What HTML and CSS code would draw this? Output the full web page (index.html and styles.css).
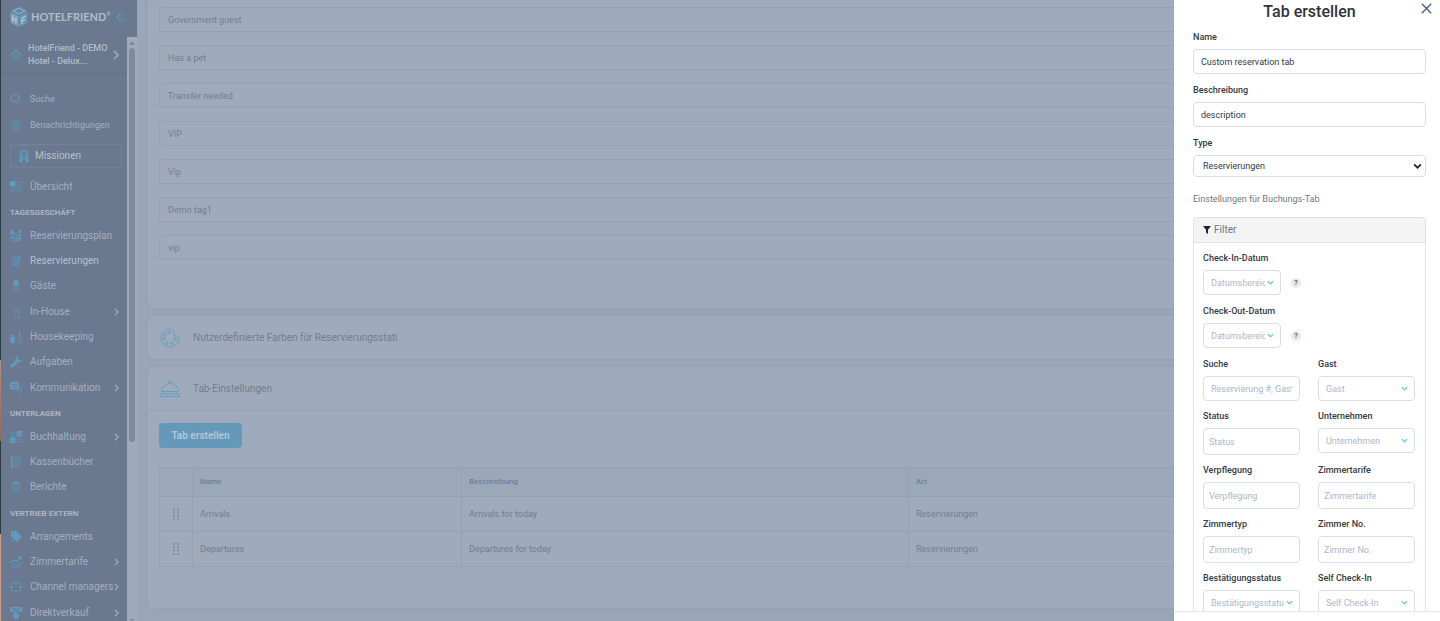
FILE: index.html
```html
<!DOCTYPE html>
<html lang="de">
<head>
<meta charset="utf-8">
<title>HotelFriend – Tab erstellen</title>
<link rel="stylesheet" href="styles.css">
</head>
<body>
<div class="app">
  <aside class="sidebar">
    <header class="brand">
      <svg class="brand-cube" viewBox="0 0 18 20"><path class="c1" d="M9 0l8 4-8 4-8-4z"/><path class="c2" d="M.5 5L8.500 9v11L.5 15.500z"/><path class="c3" d="M17.500 5L9.500 9v11l8-4.500z"/><path class="cl" d="M2.500 8.500v6M6 10.500v6M2.500 11.500L6 13.500M12 17v-6l3.500-2M12 14l3-1.500"/><path class="ct" d="M5 4l4-2 4 2-4 2z"/></svg>
      <span class="brand-name">HOTELFRIEND<sup>®</sup></span>
      <button class="collapse" aria-label="Menü einklappen"><svg viewBox="0 0 10 10"><path d="M5 1L1 5l4 4"/><path class="faint" d="M9 1L5 5l4 4"/></svg></button>
    </header>
    <div class="side-body">
      <nav class="menu">
        <a class="hotel" href="#">
          <svg class="ico" viewBox="0 0 12 12"><path class="d" d="M2 7l4-4 4 4v5H7V8.500H5V12H2z"/><path class="s" d="M.5 6.500L6 1l5.500 5.500"/></svg>
          <span>HotelFriend - DEMO<br>Hotel - Delux...</span>
          <svg class="arrow big" viewBox="0 0 6 10"><path d="M1 1l4 4-4 4"/></svg>
        </a>
        <ul class="top-links">
          <li><a href="#"><svg class="ico" viewBox="0 0 12 12"><circle class="s" cx="5" cy="5" r="4"/><path class="s d-line" d="M8 8l3 3"/></svg>Suche</a></li>
          <li><a href="#"><svg class="ico" viewBox="0 0 12 14"><path class="d" d="M6 0c3 1 4 3 4 5 0 3 1 4 2 6H0c1-2 2-3 2-6 0-2 1-4 4-5z"/><path class="b" d="M4 12h4l-2 2z"/></svg>Benachrichtigungen</a></li>
        </ul>
        <a class="mission" href="#"><svg class="ico" viewBox="0 0 12 14"><path class="b" d="M2 8L.5 13l2-.5L4 14l1.500-4zM10 8l1.500 5-2-.5L8 14l-1.500-4z"/><circle class="d" cx="6" cy="5" r="5"/><circle class="s" cx="6" cy="5" r="3.500"/></svg>Missionen</a>
        <ul>
          <li><a href="#"><svg class="ico" viewBox="0 0 12 12"><path class="b" d="M0 0h5.500v5.500H0z"/><path class="d" d="M6.500 0H12v5.500H6.500zM0 6.500h5.500V12H0zM6.500 6.500H12V12H6.500z"/></svg>Übersicht</a></li>
        </ul>
        <h2>TAGESGESCHÄFT</h2>
        <ul>
          <li><a href="#"><svg class="ico" viewBox="0 0 12 12"><path class="d" d="M0 2h12v10H0z"/><path class="b" d="M1 0h2v3H1zM9 0h2v3H9zM0 3h5v1H0zM7 5h4v1H7zM1 7h3v1H1zM5 8h2v3H5zM9 7h1v4H9z"/></svg>Reservierungsplan</a></li>
          <li><a class="current" href="#"><svg class="ico" viewBox="0 0 12 12"><path class="d" d="M1 0h7l3 3v9H1z"/><path class="b" d="M8 0l3 3H8zM3 5h6v.5H3zM3 7h6v.5H3zM3 9h4v.5H3z"/></svg>Reservierungen</a></li>
          <li><a href="#"><svg class="ico" viewBox="0 0 12 12"><circle class="b" cx="6" cy="3" r="3"/><path class="d" d="M1 12c0-7 10-7 10 0z"/></svg>Gäste</a></li>
          <li><a href="#"><svg class="ico" viewBox="0 0 12 12"><path class="d" d="M0 0h2l1 2h9l-2 6H4L2 1H0z"/><circle class="b" cx="4.500" cy="10.500" r="1"/><circle class="b" cx="9" cy="10.500" r="1"/></svg>In-House<svg class="arrow" viewBox="0 0 6 10"><path d="M1 1l4 4-4 4"/></svg></a></li>
          <li><a href="#"><svg class="ico" viewBox="0 0 12 12"><path class="b" d="M0 6h5l-.5 6h-4zM9 0h1v8H9z"/><path class="d" d="M7 8h5v4H7zM1 4h3v2H1z"/><path class="s" d="M.8 6c0-3 3.400-3 3.400 0"/></svg>Housekeeping</a></li>
          <li><a href="#"><svg class="ico" viewBox="0 0 12 12"><path class="b" d="M12 3.500A3.500 3.500 0 0 1 7.500 6.500L2 12 0 10l5.500-5.500A3.500 3.500 0 0 1 9 0L7.500 2 8 4l2 .5z"/><path class="d" d="M1 1l3 3-1 1-3-3zM8 8l3.500 3-1 1L7 9z"/></svg>Aufgaben</a></li>
          <li><a href="#"><svg class="ico" viewBox="0 0 12 12"><path class="d" d="M5 4h7v6h-1v2L9 10H5z"/><path class="b" d="M0 0h9v7H4L2 9V7H0z"/><path class="cut" d="M2 2.500h5M2 4.500h5"/></svg>Kommunikation<svg class="arrow" viewBox="0 0 6 10"><path d="M1 1l4 4-4 4"/></svg></a></li>
        </ul>
        <h2>UNTERLAGEN</h2>
        <ul>
          <li><a href="#"><svg class="ico" viewBox="0 0 12 12"><path class="d" d="M0 0h5.500v5.500H0zM6.500 6.500H12V12H6.500z"/><path class="b" d="M6.500 0H12v5.500H6.500zM0 6.500h5.500V12H0z"/><path class="cut" d="M8 2.800h2.500M1.500 9.300H4"/></svg>Buchhaltung<svg class="arrow" viewBox="0 0 6 10"><path d="M1 1l4 4-4 4"/></svg></a></li>
          <li><a href="#"><svg class="ico" viewBox="0 0 12 12"><path class="d" d="M3 0h8v12H3z"/><path class="b" d="M1 0h1.500v12H1z"/></svg>Kassenbücher</a></li>
          <li><a href="#"><svg class="ico" viewBox="0 0 12 12"><path class="d" d="M1 2h10v10H1z"/><path class="b" d="M4 1h1l1-1 1 1h1v2H4z"/></svg>Berichte</a></li>
        </ul>
        <h2>VERTRIEB EXTERN</h2>
        <ul>
          <li><a href="#"><svg class="ico" viewBox="0 0 12 12"><path class="d" d="M0 5l6 7H0z"/><path class="b" d="M1 0h5l6 6-5 5-6-6z"/><circle class="hole" cx="3" cy="2.200" r=".8"/></svg>Arrangements</a></li>
          <li><a href="#"><svg class="ico" viewBox="0 0 12 12"><path class="s" d="M0 7l4-3 3 1 4-4M8.500 1H11v2.500"/><path class="d" d="M0 10l4-3 3 1 5-4v8H0z"/></svg>Zimmertarife<svg class="arrow" viewBox="0 0 6 10"><path d="M1 1l4 4-4 4"/></svg></a></li>
          <li><a href="#"><svg class="ico" viewBox="0 0 12 12"><circle class="ring" cx="6" cy="6" r="4.500"/><path class="b" d="M5 0h2v2.500H5zM5 9.500h2V12H5zM0 5h2.500v2H0zM9.500 5H12v2H9.500zM1.500 1.500H3V3H1.500zM9 1.500h1.500V3H9zM1.500 9H3v1.500H1.500zM9 9h1.500v1.500H9z"/></svg>Channel managers<svg class="arrow" viewBox="0 0 6 10"><path d="M1 1l4 4-4 4"/></svg></a></li>
          <li><a href="#"><svg class="ico" viewBox="0 0 12 12"><path class="b" d="M0 0h12v5H9V3.500H3V5H0zM4 5h1.500V4h1v2.500L9 7v3l-1 2H5L3 9z"/><path class="cut" d="M2 2h8"/></svg>Direktverkauf<svg class="arrow" viewBox="0 0 6 10"><path d="M1 1l4 4-4 4"/></svg></a></li>
        </ul>
      </nav>
      <div class="scrollbar"><i class="up"></i><i class="thumb"></i><i class="down"></i></div>
    </div>
  </aside>

  <main class="content">
    <section class="card tags">
      <input aria-label="Tag 1" value="Government guest">
      <input aria-label="Tag 2" value="Has a pet">
      <input aria-label="Tag 3" value="Transfer needed">
      <input aria-label="Tag 4" value="VIP">
      <input aria-label="Tag 5" value="Vip">
      <input aria-label="Tag 6" value="Demo tag1">
      <input aria-label="Tag 7" value="vip">
    </section>
    <section class="card">
      <h3><svg viewBox="0 0 20 20"><path d="M10 1a9 9 0 1 0 9 9c0-1-.5-2-2-2s-2.500 0-3-1 .5-2 0-3.500S12 1 10 1z"/><circle cx="9" cy="4.500" r="1.300"/><circle cx="5" cy="7" r="1.300"/><circle cx="4" cy="11" r="1.300"/><circle cx="7" cy="15" r="1.300"/><circle cx="12" cy="15" r="1.300"/><circle cx="15" cy="11" r="1.300"/></svg>Nutzerdefinierte Farben für Reservierungsstati</h3>
    </section>
    <section class="card tabs">
      <h3><svg viewBox="0 0 20 20"><path d="M1.500 12.500a8.500 8 0 0 1 17 0zM8 2.500h4M10 2.500v2M3.500 12.500V15M16.500 12.500V15M.5 15h19v2.500H.5z"/></svg>Tab-Einstellungen</h3>
      <div class="tabs-body">
        <button class="create">Tab erstellen</button>
        <table>
          <colgroup><col class="col-grip"><col class="col-name"><col class="col-desc"><col></colgroup>
          <thead><tr><th></th><th>Name</th><th>Beschreibung</th><th>Art</th></tr></thead>
          <tbody>
            <tr><td class="grip"><svg viewBox="0 0 6 12"><path d="M0 1h6M0 4.300h6M0 7.600h6M0 11h6"/></svg></td><td>Arrivals</td><td>Arrivals for today</td><td>Reservierungen</td></tr>
            <tr><td class="grip"><svg viewBox="0 0 6 12"><path d="M0 1h6M0 4.300h6M0 7.600h6M0 11h6"/></svg></td><td>Departures</td><td>Departures for today</td><td>Reservierungen</td></tr>
          </tbody>
        </table>
      </div>
    </section>
  </main>

  <form class="drawer">
    <div class="drawer-scroll">
      <button type="button" class="close" aria-label="Schließen"><svg viewBox="0 0 10 10"><path d="M.7.7l8.600 8.600M9.300.7L.7 9.300"/></svg></button>
      <h1>Tab erstellen</h1>
      <div class="fields">
        <div class="field"><label for="name">Name</label><input id="name" value="Custom reservation tab"></div>
        <div class="field"><label for="desc">Beschreibung</label><input id="desc" value="description"></div>
        <div class="field"><label for="type">Type</label><div class="select type"><select id="type"><option>Reservierungen</option></select><svg viewBox="0 0 8 5"><path d="M1 1l3 3 3-3"/></svg></div></div>
      </div>
      <p>Einstellungen für Buchungs-Tab</p>
      <section class="filter">
        <h2><svg viewBox="0 0 8 8"><path d="M0 0h8L5 3.800V8L3 6.500V3.800z"/></svg>Filter</h2>
        <div class="filter-body">
          <div class="fields">
            <div class="field"><label for="cin">Check-In-Datum</label><div class="date"><div class="select"><select id="cin"><option>Datumsbereich</option></select><svg viewBox="0 0 8 5"><path d="M1 1l3 3 3-3"/></svg></div><button type="button" class="help">?</button></div></div>
            <div class="field"><label for="cout">Check-Out-Datum</label><div class="date"><div class="select"><select id="cout"><option>Datumsbereich</option></select><svg viewBox="0 0 8 5"><path d="M1 1l3 3 3-3"/></svg></div><button type="button" class="help">?</button></div></div>
          </div>
          <div class="pairs">
            <div class="field"><label for="q">Suche</label><input id="q" placeholder="Reservierung #, Gast"></div>
            <div class="field"><label for="guest">Gast</label><div class="select"><select id="guest"><option>Gast</option></select><svg viewBox="0 0 8 5"><path d="M1 1l3 3 3-3"/></svg></div></div>
            <div class="field multi"><label for="status">Status</label><input id="status" placeholder="Status"></div>
            <div class="field"><label for="company">Unternehmen</label><div class="select"><select id="company"><option>Unternehmen</option></select><svg viewBox="0 0 8 5"><path d="M1 1l3 3 3-3"/></svg></div></div>
            <div class="field multi"><label for="board">Verpflegung</label><input id="board" placeholder="Verpflegung"></div>
            <div class="field multi"><label for="rate">Zimmertarife</label><input id="rate" placeholder="Zimmertarife"></div>
            <div class="field multi"><label for="rtype">Zimmertyp</label><input id="rtype" placeholder="Zimmertyp"></div>
            <div class="field multi"><label for="rno">Zimmer No.</label><input id="rno" placeholder="Zimmer No."></div>
            <div class="field"><label for="conf">Bestätigungsstatus</label><div class="select"><select id="conf"><option>Bestätigungsstatus</option></select><svg viewBox="0 0 8 5"><path d="M1 1l3 3 3-3"/></svg></div></div>
            <div class="field"><label for="self">Self Check-In</label><div class="select"><select id="self"><option>Self Check-In</option></select><svg viewBox="0 0 8 5"><path d="M1 1l3 3 3-3"/></svg></div></div>
          </div>
        </div>
      </section>
    </div>
    <footer class="drawer-foot"></footer>
  </form>
</div>
</body>
</html>
```
FILE: styles.css
```css
* { box-sizing: border-box; }
body, h1, h2, h3, p, ul { margin: 0; padding: 0; }
ul { list-style: none; }
body { font: 9px/12px Roboto, "Liberation Sans", sans-serif; color: #333a44; }
button, input, select { font: inherit; color: inherit; margin: 0; }
button { border: 0; padding: 0; background: none; }
a { color: inherit; text-decoration: none; }
svg { fill: none; flex: none; display: block; }

.app { display: flex; height: 100vh; overflow: hidden; background: #98a6b8; }

/* Sidebar */
.sidebar { flex: none; width: 137px; display: flex; flex-direction: column; color: #a3afbf; background: #6a798f; position: relative; }
.sidebar::before { content: ""; position: absolute; left: 0; top: 0; bottom: 0; width: 1px; background: linear-gradient(#2a3d42 58%, #b48f83 58%, #8d6a5d 71%, #2a3d42 71%, #2a3d42 86%, #c9a091 86%); }
.brand { flex: none; height: 37px; display: flex; align-items: center; padding: 0 11px 3px 10px; }
.brand-cube { width: 18px; height: 20px; }
.c1 { fill: #7aa7c4; } .c2 { fill: #76a3c1; } .c3 { fill: #689abb; }
.cl { stroke: #b5c5d4; stroke-width: 1.200; }
.ct { fill: #5f86a5; }
.brand-name { margin-left: 3px; font: 700 11px/12px Lato, sans-serif; color: #b1bcca; flex: 1; white-space: nowrap; }
.brand-name sup { font-size: 5px; line-height: 1px; }
.collapse svg { width: 10px; height: 10px; stroke: #589bc0; stroke-width: 1.300; }
.collapse .faint { stroke: #64849f; }
.side-body { flex: 1; display: flex; min-height: 0; }
.menu { flex: 1; min-width: 0; overflow: hidden; font-size: 10px; }
.hotel { height: 37px; display: flex; align-items: center; padding: 0 10px; gap: 6px; border-bottom: 1px solid #62718a; color: #b1bcca; font-weight: 500; font-size: 9px; line-height: 13px; white-space: nowrap; }
.hotel span { flex: 1; }
.menu ul { padding: 0 8px 0 10px; }
.menu .top-links { padding-top: 12px; font-size: 9px; }
.menu li { height: 25px; }
.menu li:nth-child(3n), .menu .top-links li { height: 26px; }
.menu li a { display: flex; align-items: center; height: 100%; white-space: nowrap; }
.menu li .ico { margin-right: 8px; }
.menu .current { color: #b5c0cd; }
.menu h2 { height: 24px; padding: 3px 10px 0; font-size: 8px; line-height: 21px; font-weight: 700; color: #aab5c4; }
.mission { display: flex; align-items: center; gap: 5px; height: 24px; margin: 6px 5px 6px 10px; padding-left: 7px; border: 1px solid #728299; color: #b5c0cd; }
.ico { width: 12px; height: 12px; }
.top-links .ico, .mission .ico { height: 14px; }
.b { fill: #5f9bbd; } .d { fill: #6483a0; } .hole { fill: #6a798f; }
.s { stroke: #5f9bbd; stroke-width: 1.200; }
.s.d-line, .ring { stroke: #6483a0; }
.cut { stroke: #6a798f; stroke-width: .8; }
.arrow { width: 5px; height: 8px; margin-left: auto; stroke: #a3afbf; stroke-width: 1.500; }
.arrow.big { width: 6px; height: 10px; }
.scrollbar { width: 10px; background: #9dabbd; display: flex; flex-direction: column; align-items: center; padding-top: 4px; }
.up, .down { border: 3px solid transparent; border-top: 0; border-bottom: 4px solid #7e8a9b; }
.down { border-bottom: 0; border-top: 2px solid #7e8a9b; margin-top: auto; }
.thumb { flex: 0 1 68%; width: 6px; margin-top: 3px; border-radius: 3px; background: #7f8b9d; }

/* Content */
.content { flex: 1; min-width: 0; padding: 0 11px 13px; display: flex; flex-direction: column; gap: 8px; color: #727e8f; }
.card { flex: none; background: #9fabbc; border-radius: 6px; box-shadow: 0 0 3px #8f9db0; }
.tags { display: flex; flex-direction: column; gap: 13px; padding: 7px 11px 48px; border-radius: 0 0 6px 6px; }
.tags input { height: 25px; padding: 0 8px; border: 1px solid #94a1b3; border-radius: 3px; background: none; }
.card h3 { height: 43px; display: flex; align-items: center; gap: 13px; padding: 0 12px; font-size: 10px; font-weight: 400; }
.card h3 svg { width: 20px; height: 20px; stroke: #659fc0; }
.card.tabs h3 { height: 44px; border-bottom: 1px solid #94a2b4; }
.tabs-body { padding: 12px 11px 41px; }
.create { display: block; width: 83px; height: 25px; margin-bottom: 19px; border-radius: 4px; background: #6499bb; color: #b1c5d5; font-size: 10px; font-weight: 700; }
table { width: 100%; border-collapse: collapse; table-layout: fixed; }
.col-grip { width: 33px; } .col-name { width: 269px; } .col-desc { width: 447px; }
th, td { height: 35px; padding: 0 7px; border: 1px solid #93a1b3; text-align: left; font-weight: 400; }
th { height: 29px; background: #9ba8ba; color: #6f809b; font-weight: 500; font-size: 8px; }
.grip svg { width: 6px; height: 12px; margin: auto; stroke: #8591a2; stroke-width: 2; stroke-dasharray: 2; }

/* Drawer */
.drawer { position: fixed; inset: 0 0 0 auto; width: 266px; display: flex; flex-direction: column; background: #fff; }
.drawer-scroll { flex: 1; min-height: 0; overflow: hidden; padding: 2px 14px 0 19px; }
.drawer-foot { height: 10px; border-top: 1px solid #e3e5e8; }
.close { position: absolute; top: 3px; right: 8px; }
.close svg { width: 11px; height: 11px; stroke: #4c5d7c; stroke-width: 1.200; }
h1 { font-size: 16px; line-height: 20px; font-weight: 500; text-align: center; color: #2f3337; margin-bottom: 9px; }
.fields { display: grid; gap: 10px; }
.field label { display: block; margin-bottom: 6px; font-weight: 500; }
.field input, .select select { display: block; width: 100%; height: 25px; padding: 0 7px; border: 1px solid #d9dde6; border-radius: 4px; background: #fff; }
.field ::placeholder { color: #a9b8cc; opacity: 1; }
.field.multi input { height: 27px; padding: 0 5px; }
.select { position: relative; }
.select select { appearance: none; padding-right: 15px; color: #a9b8cc; }
.select svg { position: absolute; right: 7px; top: 10px; width: 7px; height: 5px; stroke: #4fb9e8; stroke-width: 1.300; }
.select.type select { height: 22px; padding-left: 9px; color: #333a44; }
.select.type svg { right: 4px; top: 8px; width: 9px; height: 6px; stroke: #222; stroke-width: 1.500; }
.drawer p { margin: 16px 0 12px; color: #6f7680; }
.filter { border: 1px solid #e0e2e5; border-radius: 3px; }
.filter h2 { display: flex; align-items: center; gap: 3px; height: 25px; padding: 0 9px; background: #f3f3f3; border-bottom: 1px solid #e0e2e5; font-size: 10px; font-weight: 400; color: #6f7680; }
.filter h2 svg { width: 8px; height: 8px; fill: #222; }
.filter-body { padding: 9px 10px 10px 9px; }
.date { display: flex; align-items: center; gap: 10px; }
.date .select { width: 78px; }
.help { width: 10px; height: 10px; border-radius: 50%; background: #e8eaee; color: #5d6b80; font-size: 8px; line-height: 10px; font-weight: 700; }
.pairs { display: grid; grid-template-columns: 1fr 1fr; gap: 9px 18px; margin-top: 10px; }
.pairs .field { min-width: 0; }
```
